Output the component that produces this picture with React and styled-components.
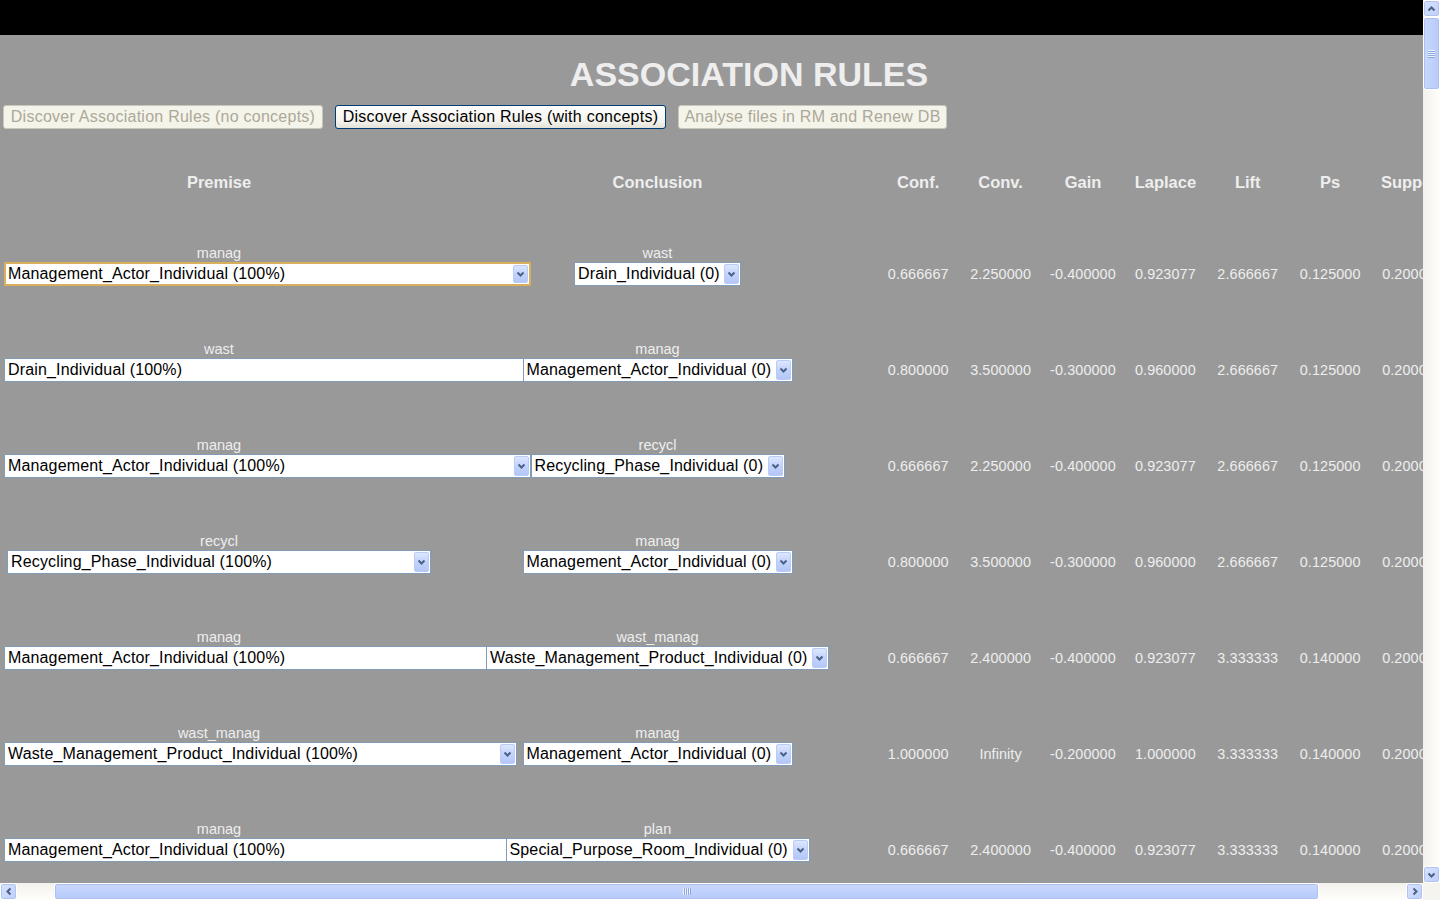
import React from 'react';
import styled, { createGlobalStyle } from 'styled-components';

const Global = createGlobalStyle`
  html, body { margin: 0; padding: 0; overflow: hidden; background: #999999; }
  body { font-family: "Liberation Sans", Arial, sans-serif; }
`;

const Frame = styled.div`
  width: 1440px;
  height: 900px;
  display: grid;
  grid-template-columns: 1423px 17px;
  grid-template-rows: 883px 17px;
  overflow: hidden;
`;

const Viewport = styled.div`
  overflow: hidden;
  background: #999999;
`;

const Page = styled.div`
  width: 1498px;
`;

const TopBar = styled.div`
  height: 35px;
  background: #000;
`;

const Title = styled.h1`
  margin: 19px 0 0;
  font: bold 34px/40px "Liberation Sans", Arial, sans-serif;
  color: #eeeeee;
  text-align: center;
`;

const ButtonRow = styled.div`
  display: flex;
  gap: 12px;
  margin-top: 11px;
  padding-left: 3px;
`;

const Btn = styled.button`
  box-sizing: border-box;
  width: ${(p) => p.$w}px;
  height: 24px;
  padding: 0;
  font: 16px/22px "Liberation Sans", Arial, sans-serif;
  letter-spacing: 0.25px;
  border-radius: 3px;
  background: ${(p) => (p.disabled ? '#f5f4ea' : 'linear-gradient(#ffffff, #f4f3ee 70%, #e3e1d6)')};
  color: ${(p) => (p.disabled ? '#aca899' : '#000000')};
  border: 1px solid ${(p) => (p.disabled ? '#c9c7ba' : '#003c74')};
`;

const Table = styled.div`
  margin-top: 43px;
`;

const Cols = styled.div`
  display: grid;
  grid-template-columns: 438px 439px repeat(7, 82.4px);
`;

const HeadRow = styled(Cols)`
  height: 20px;
  margin-bottom: 34px;
`;

const Head = styled.div`
  font: bold 16.5px/20px "Liberation Sans", Arial, sans-serif;
  color: #eeeeee;
  text-align: center;
  white-space: nowrap;
`;

const Row = styled(Cols)`
  height: 96px;
  box-sizing: border-box;
  padding-top: 18px;
`;

const RuleCell = styled.div`
  padding: 0 4px;
  min-width: 0;
`;

const Label = styled.div`
  font: 14.5px/18px "Liberation Sans", Arial, sans-serif;
  color: #eeeeee;
  text-align: center;
  white-space: nowrap;
`;

const Select = styled.div`
  position: relative;
  box-sizing: border-box;
  display: flex;
  width: ${(p) => p.$w}px;
  height: 24px;
  margin: 0 auto;
  background: #ffffff;
  border: ${(p) => (p.$focus ? '2px solid #d9ae5c' : '1px solid #7f9db9')};
  font: 16px/22px "Liberation Sans", Arial, sans-serif;
  letter-spacing: 0.15px;
  color: #000000;
`;

const SelText = styled.span`
  flex: 1;
  padding-left: ${(p) => (p.$focus ? '2px' : '3px')};
  line-height: ${(p) => (p.$focus ? '20px' : '22px')};
  white-space: nowrap;
  overflow: hidden;
`;

const Drop = styled.span`
  box-sizing: border-box;
  width: 15px;
  margin: 1px 1px 1px 0;
  border: 1px solid #b9cbf6;
  border-radius: 2px;
  background: linear-gradient(#dce6fe, #c2d3fc 50%, #b4c7f7);
  display: flex;
  align-items: center;
  justify-content: center;
`;

const Value = styled.div`
  padding-top: 18px;
  font: 14.4px/24px "Liberation Sans", Arial, sans-serif;
  letter-spacing: 0.1px;
  color: #eeeeee;
  text-align: center;
  white-space: nowrap;
`;

const VScroll = styled.div`
  display: flex;
  flex-direction: column;
  background: linear-gradient(90deg, #f3f1ec, #fefefb);
`;

const HScroll = styled.div`
  display: flex;
  background: linear-gradient(#f3f1ec, #fefefb);
`;

const Corner = styled.div`
  background: #f5f4ef;
`;

const SBtn = styled.div`
  box-sizing: border-box;
  width: 17px;
  height: 17px;
  flex: none;
  border: 1px solid #ffffff;
  border-radius: 3px;
  background: linear-gradient(135deg, #d9e4fe, #bccefa);
  box-shadow: inset 0 0 0 1px #b0c3f2;
  display: flex;
  align-items: center;
  justify-content: center;
`;

const Spacer = styled.div`
  flex: ${(p) => (p.$size ? `0 0 ${p.$size}px` : '1')};
`;

const Thumb = styled.div`
  box-sizing: border-box;
  flex: 0 0 ${(p) => p.$size}px;
  border: 1px solid #ffffff;
  border-radius: 3px;
  background: ${(p) =>
    p.$vertical ? 'linear-gradient(90deg, #c9d8fd, #b7cafa)' : 'linear-gradient(#c9d8fd, #b7cafa)'};
  box-shadow: inset 0 0 0 1px #aebff0;
  display: flex;
  align-items: center;
  justify-content: center;
`;

const Chevron = ({ dir }) => {
  const paths = {
    down: 'M1.5 1.5 L4.5 4.5 L7.5 1.5',
    up: 'M1.5 4.5 L4.5 1.5 L7.5 4.5',
  };
  return (
    <svg width="9" height="6" viewBox="0 0 9 6">
      <path d={paths[dir]} fill="none" stroke="#4d6185" strokeWidth="2" />
    </svg>
  );
};

const HChevron = ({ dir }) => (
  <svg width="6" height="9" viewBox="0 0 6 9">
    <path
      d={dir === 'left' ? 'M4.5 1.5 L1.5 4.5 L4.5 7.5' : 'M1.5 1.5 L4.5 4.5 L1.5 7.5'}
      fill="none"
      stroke="#4d6185"
      strokeWidth="2"
    />
  </svg>
);

const Grip = ({ vertical }) =>
  vertical ? (
    <svg width="7" height="8" viewBox="0 0 7 8">
      {[0, 2, 4, 6].map((y) => (
        <rect key={y} x="0" y={y} width="7" height="1" fill="#eef3ff" />
      ))}
      {[1, 3, 5, 7].map((y) => (
        <rect key={y} x="0" y={y} width="7" height="1" fill="#8ca6e0" />
      ))}
    </svg>
  ) : (
    <svg width="8" height="7" viewBox="0 0 8 7">
      {[0, 2, 4, 6].map((x) => (
        <rect key={x} x={x} y="0" width="1" height="7" fill="#eef3ff" />
      ))}
      {[1, 3, 5, 7].map((x) => (
        <rect key={x} x={x} y="0" width="1" height="7" fill="#8ca6e0" />
      ))}
    </svg>
  );

const DropDown = ({ text, w, focus }) => (
  <Select $w={w} $focus={focus}>
    <SelText $focus={focus}>{text}</SelText>
    <Drop>
      <Chevron dir="down" />
    </Drop>
  </Select>
);

const headers = ['Conf.', 'Conv.', 'Gain', 'Laplace', 'Lift', 'Ps', 'Support'];

const rules = [
  {
    pl: 'manag', pt: 'Management_Actor_Individual (100%)', pw: 527, focus: true,
    cl: 'wast', ct: 'Drain_Individual (0)', cw: 167,
    v: ['0.666667', '2.250000', '-0.400000', '0.923077', '2.666667', '0.125000', '0.200000'],
  },
  {
    pl: 'wast', pt: 'Drain_Individual (100%)', pw: 545,
    cl: 'manag', ct: 'Management_Actor_Individual (0)', cw: 270,
    v: ['0.800000', '3.500000', '-0.300000', '0.960000', '2.666667', '0.125000', '0.200000'],
  },
  {
    pl: 'manag', pt: 'Management_Actor_Individual (100%)', pw: 527,
    cl: 'recycl', ct: 'Recycling_Phase_Individual (0)', cw: 254,
    v: ['0.666667', '2.250000', '-0.400000', '0.923077', '2.666667', '0.125000', '0.200000'],
  },
  {
    pl: 'recycl', pt: 'Recycling_Phase_Individual (100%)', pw: 424,
    cl: 'manag', ct: 'Management_Actor_Individual (0)', cw: 270,
    v: ['0.800000', '3.500000', '-0.300000', '0.960000', '2.666667', '0.125000', '0.200000'],
  },
  {
    pl: 'manag', pt: 'Management_Actor_Individual (100%)', pw: 527,
    cl: 'wast_manag', ct: 'Waste_Management_Product_Individual (0)', cw: 343,
    v: ['0.666667', '2.400000', '-0.400000', '0.923077', '3.333333', '0.140000', '0.200000'],
  },
  {
    pl: 'wast_manag', pt: 'Waste_Management_Product_Individual (100%)', pw: 513,
    cl: 'manag', ct: 'Management_Actor_Individual (0)', cw: 270,
    v: ['1.000000', 'Infinity', '-0.200000', '1.000000', '3.333333', '0.140000', '0.200000'],
  },
  {
    pl: 'manag', pt: 'Management_Actor_Individual (100%)', pw: 527,
    cl: 'plan', ct: 'Special_Purpose_Room_Individual (0)', cw: 304,
    v: ['0.666667', '2.400000', '-0.400000', '0.923077', '3.333333', '0.140000', '0.200000'],
  },
];

export default function App() {
  return (
    <>
      <Global />
      <Frame>
        <Viewport>
          <Page>
            <TopBar />
            <Title>ASSOCIATION RULES</Title>
            <ButtonRow>
              <Btn $w={320} disabled>Discover Association Rules (no concepts)</Btn>
              <Btn $w={331}>Discover Association Rules (with concepts)</Btn>
              <Btn $w={269} disabled>Analyse files in RM and Renew DB</Btn>
            </ButtonRow>
            <Table>
              <HeadRow>
                <Head>Premise</Head>
                <Head>Conclusion</Head>
                {headers.map((h) => (
                  <Head key={h}>{h}</Head>
                ))}
              </HeadRow>
              {rules.map((r, i) => (
                <Row key={i}>
                  <RuleCell>
                    <Label>{r.pl}</Label>
                    <DropDown text={r.pt} w={r.pw} focus={r.focus} />
                  </RuleCell>
                  <RuleCell>
                    <Label>{r.cl}</Label>
                    <DropDown text={r.ct} w={r.cw} />
                  </RuleCell>
                  {r.v.map((v, j) => (
                    <Value key={j}>{v}</Value>
                  ))}
                </Row>
              ))}
            </Table>
          </Page>
        </Viewport>
        <VScroll>
          <SBtn>
            <Chevron dir="up" />
          </SBtn>
          <Thumb $vertical $size={73}>
            <Grip vertical />
          </Thumb>
          <Spacer />
          <SBtn>
            <Chevron dir="down" />
          </SBtn>
        </VScroll>
        <HScroll>
          <SBtn>
            <HChevron dir="left" />
          </SBtn>
          <Spacer $size={37} />
          <Thumb $size={1265}>
            <Grip />
          </Thumb>
          <Spacer />
          <SBtn>
            <HChevron dir="right" />
          </SBtn>
        </HScroll>
        <Corner />
      </Frame>
    </>
  );
}
